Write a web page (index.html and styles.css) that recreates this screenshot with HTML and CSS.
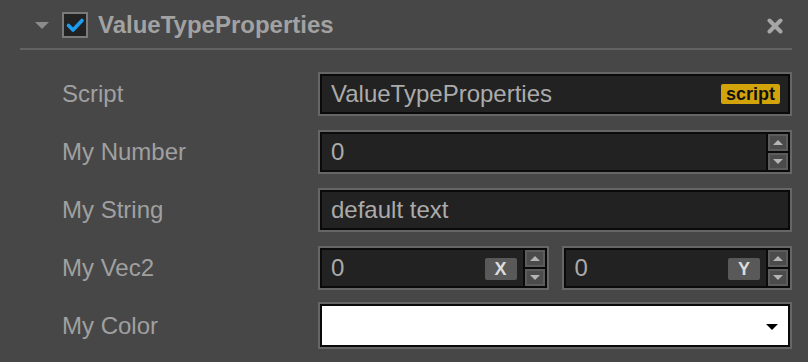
FILE: index.html
```html
<!DOCTYPE html>
<html>
<head>
<meta charset="utf-8">
<link rel="stylesheet" href="styles.css">
</head>
<body>
<div class="panel">
  <div class="header">
    <svg class="fold" width="14" height="7" viewBox="0 0 14 7"><polygon points="0,0 14,0 7,7" fill="#8c8c8c"/></svg>
    <div class="checkbox">
      <svg width="22" height="22" viewBox="0 0 22 22"><polyline points="4.5,11.5 9,16 18,6.5" fill="none" stroke="#1d9cf0" stroke-width="3.6" stroke-linecap="round" stroke-linejoin="round"/></svg>
    </div>
    <div class="title">ValueTypeProperties</div>
    <svg class="close" width="16" height="16" viewBox="0 0 16 16"><path d="M2.5 2.5 L13.5 13.5 M13.5 2.5 L2.5 13.5" stroke="#a6a6a6" stroke-width="4" stroke-linecap="round"/></svg>
  </div>
  <div class="sep"></div>
  <div class="rows">
    <div class="row">
      <div class="label">Script</div>
      <div class="field"><div class="inner">
        <div class="value">ValueTypeProperties</div>
        <div class="tag">script</div>
      </div></div>
    </div>
    <div class="row">
      <div class="label">My Number</div>
      <div class="field"><div class="inner">
        <div class="value">0</div>
        <div class="spin">
          <div class="btn"><span class="up"></span></div>
          <div class="btn"><span class="down"></span></div>
        </div>
      </div></div>
    </div>
    <div class="row">
      <div class="label">My String</div>
      <div class="field"><div class="inner">
        <div class="value">default text</div>
      </div></div>
    </div>
    <div class="row row-vec">
      <div class="label">My Vec2</div>
      <div class="vec">
        <div class="field"><div class="inner">
          <div class="value">0</div>
          <div class="axis">X</div>
          <div class="spin">
            <div class="btn"><span class="up"></span></div>
            <div class="btn"><span class="down"></span></div>
          </div>
        </div></div>
        <div class="field"><div class="inner">
          <div class="value">0</div>
          <div class="axis">Y</div>
          <div class="spin">
            <div class="btn"><span class="up"></span></div>
            <div class="btn"><span class="down"></span></div>
          </div>
        </div></div>
      </div>
    </div>
    <div class="row row-color">
      <div class="label">My Color</div>
      <div class="field"><div class="inner color">
        <span class="caret"></span>
      </div></div>
    </div>
  </div>
</div>
</body>
</html>
```
FILE: styles.css
```css
html, body {
  margin: 0;
  padding: 0;
  background: #474747;
}
.panel {
  width: 808px;
  height: 362px;
  font-family: "Liberation Sans", Arial, Helvetica, sans-serif;
  color: #a0a0a0;
  overflow: hidden;
}
.header {
  box-sizing: border-box;
  height: 48px;
  padding: 2px 25px 0 35px;
  display: flex;
  align-items: center;
}
.fold {
  margin-right: 13px;
  flex: none;
}
.checkbox {
  box-sizing: border-box;
  width: 26px;
  height: 26px;
  border: 2px solid #7a7a7a;
  background: #222;
  margin-right: 10px;
  flex: none;
}
.checkbox svg { display: block; }
.title {
  flex: 1;
  font-size: 24px;
  font-weight: bold;
  color: #a2a2a2;
}
.close {
  flex: none;
  margin-top: 2px;
}
.sep {
  height: 2px;
  background: #636363;
  margin: 0 16px 0 20px;
}
.rows {
  padding: 22px 16px 0 62px;
  display: flex;
  flex-direction: column;
}
.row {
  display: flex;
  align-items: center;
  height: 44px;
  margin-bottom: 14px;
}
.row-vec { margin-bottom: 12px; }
.row-color { height: 47px; }
.label {
  width: 256px;
  flex: none;
  font-size: 24px;
  color: #a0a0a0;
}
.field {
  box-sizing: border-box;
  flex: 1;
  height: 100%;
  border: 2px solid #666;
  padding: 2px;
  background: #0a0a0a;
  min-width: 0;
}
.inner {
  height: 100%;
  background: #222;
  display: flex;
  align-items: center;
}
.value {
  flex: 1;
  padding-left: 9px;
  font-size: 24px;
  color: #ababab;
  white-space: nowrap;
}
.tag {
  height: 20px;
  line-height: 20px;
  padding: 0 5px;
  margin-right: 8px;
  background: #d3a409;
  color: #111;
  font-size: 18px;
  font-weight: bold;
  border-radius: 2px;
}
.spin {
  align-self: stretch;
  width: 20px;
  padding-left: 2px;
  background: #0a0a0a;
  display: flex;
  flex-direction: column;
  gap: 2px;
}
.btn {
  box-sizing: border-box;
  flex: 1;
  background: #4b4b4b;
  border: 2px solid #5c5c5c;
  display: flex;
  align-items: center;
  justify-content: center;
}
.up, .down {
  width: 0;
  height: 0;
  border-left: 5px solid transparent;
  border-right: 5px solid transparent;
}
.up { border-bottom: 5px solid #b4b4b4; }
.down { border-top: 5px solid #b4b4b4; }
.vec {
  flex: 1;
  height: 100%;
  display: flex;
  gap: 13px;
}
.axis {
  width: 32px;
  height: 22px;
  line-height: 22px;
  margin-top: 2px;
  margin-right: 6px;
  background: #595959;
  color: #dcdcdc;
  font-size: 18px;
  font-weight: bold;
  text-align: center;
  border-radius: 2px;
}
.color {
  background: #fff;
  justify-content: flex-end;
}
.caret {
  width: 0;
  height: 0;
  border-left: 6px solid transparent;
  border-right: 6px solid transparent;
  border-top: 6px solid #000;
  margin-right: 10px;
  margin-top: 2px;
}
```
